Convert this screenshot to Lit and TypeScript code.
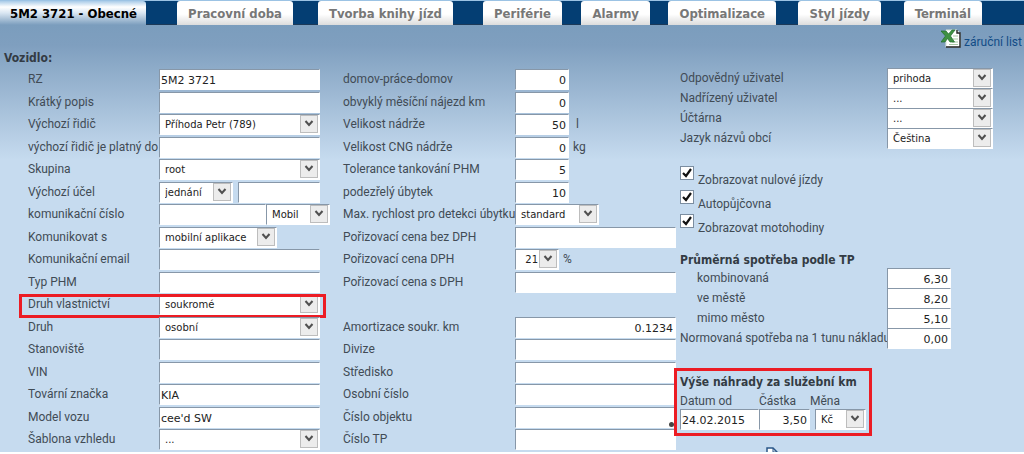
import { LitElement, html, css, svg, nothing } from "lit";
import { customElement } from "lit/decorators.js";
import { classMap } from "lit/directives/class-map.js";

type Control =
  | { kind: "text"; size: string; value?: string; num?: boolean; label?: string }
  | { kind: "select"; size: string; value: string; num?: boolean; label?: string };

interface Row {
  id: string;
  label: string;
  controls: Control[];
  unit?: string;
  marked?: boolean;
  dot?: boolean;
}

const text = (size: string, value = "", num = false, label = ""): Control => ({ kind: "text", size, value, num, label });
const select = (size: string, value: string, num = false, label = ""): Control => ({ kind: "select", size, value, num, label });

const TABS = ["5M2 3721 - Obecné", "Pracovní doba", "Tvorba knihy jízd", "Periférie", "Alarmy", "Optimalizace", "Styl jízdy", "Terminál"];

const VEHICLE: Row[] = [
  { id: "rz", label: "RZ", controls: [text("full", "5M2 3721")] },
  { id: "popis", label: "Krátký popis", controls: [text("full")] },
  { id: "ridic", label: "Výchozí řidič", controls: [select("full", "Příhoda Petr (789)")] },
  { id: "platny", label: "výchozí řidič je platný do", controls: [text("full")] },
  { id: "skupina", label: "Skupina", controls: [select("full", "root")] },
  { id: "ucel", label: "Výchozí účel", controls: [select("s74", "jednání"), text("rest", "", false, "Výchozí účel – text")] },
  { id: "cislo", label: "komunikační číslo", controls: [text("s107"), select("s64", "Mobil", false, "Typ čísla")] },
  { id: "komunikovat", label: "Komunikovat s", controls: [select("s118", "mobilní aplikace")] },
  { id: "email", label: "Komunikační email", controls: [text("full")] },
  { id: "phm", label: "Typ PHM", controls: [text("full")] },
  { id: "vlastnictvi", label: "Druh vlastnictví", controls: [select("full", "soukromé")], marked: true },
  { id: "druh", label: "Druh", controls: [select("full", "osobní")] },
  { id: "stanoviste", label: "Stanoviště", controls: [text("full")] },
  { id: "vin", label: "VIN", controls: [text("full")] },
  { id: "znacka", label: "Tovární značka", controls: [text("full", "KIA")] },
  { id: "model", label: "Model vozu", controls: [text("full", "cee'd SW")] },
  { id: "sablona", label: "Šablona vzhledu", controls: [select("full", "...")] },
];

const PARAMS: (Row | null)[] = [
  { id: "domov", label: "domov-práce-domov", controls: [text("s54", "0", true)] },
  { id: "najezd", label: "obvyklý měsíční nájezd km", controls: [text("s54", "0", true)] },
  { id: "nadrz", label: "Velikost nádrže", controls: [text("s54", "50", true)], unit: " l" },
  { id: "cng", label: "Velikost CNG nádrže", controls: [text("s54", "0", true)], unit: "kg" },
  { id: "tolerance", label: "Tolerance tankování PHM", controls: [text("s54", "5", true)] },
  { id: "ubytek", label: "podezřelý úbytek", controls: [text("s54", "10", true)] },
  { id: "rychlost", label: "Max. rychlost pro detekci úbytku", controls: [select("s84", "standard")] },
  { id: "bezdph", label: "Pořizovací cena bez DPH", controls: [text("full")] },
  { id: "dph", label: "Pořizovací cena DPH", controls: [select("s44", "21", true)], unit: "%" },
  { id: "sdph", label: "Pořizovací cena s DPH", controls: [text("full")] },
  null,
  { id: "amortizace", label: "Amortizace soukr. km", controls: [text("full", "0.1234", true)] },
  { id: "divize", label: "Divize", controls: [text("full")] },
  { id: "stredisko", label: "Středisko", controls: [text("full")] },
  { id: "osobni", label: "Osobní číslo", controls: [text("full")] },
  { id: "objekt", label: "Číslo objektu", controls: [text("full")], dot: true },
  { id: "tp", label: "Číslo TP", controls: [text("full")] },
  { id: "dalsi", label: "", controls: [text("full", "", false, "Další údaj")] },
];

const USERS: Row[] = [
  { id: "odpovedny", label: "Odpovědný uživatel", controls: [select("s106", "prihoda")] },
  { id: "nadrizeny", label: "Nadřízený uživatel", controls: [select("s106", "...")] },
  { id: "uctarna", label: "Účtárna", controls: [select("s106", "...")] },
  { id: "jazyk", label: "Jazyk názvů obcí", controls: [select("s106", "Čeština")] },
];

const CHECKS = ["Zobrazovat nulové jízdy", "Autopůjčovna", "Zobrazovat motohodiny"];

const CONSUMPTION = [
  { id: "komb", label: "kombinovaná", value: "6,30", indent: true },
  { id: "mesto", label: "ve městě", value: "8,20", indent: true },
  { id: "mimo", label: "mimo město", value: "5,10", indent: true },
  { id: "norm", label: "Normovaná spotřeba na 1 tunu nákladu", value: "0,00", indent: false },
];

@customElement("app-root")
export class AppRoot extends LitElement {
  static styles = css`
    :host {
      display: flex;
      flex-direction: column;
      box-sizing: border-box;
      height: 100vh;
      padding-bottom: 2px;
      overflow: hidden;
      background: #fff;
      color: #414b55;
      font: 12px/16px Roboto, "DejaVu Sans", sans-serif;
    }
    * { box-sizing: border-box; }
    .tabs {
      display: grid;
      grid-template-columns: 146px 129px 142px 91px 70px 108px 87px 83px;
      column-gap: 18px;
      flex: none;
      height: 25px;
      border-top: 1px solid #9cc3e4;
      border-bottom: 1px solid #1d3a58;
      background: #043e73;
    }
    .tab {
      justify-self: end;
      margin: 0;
      padding: 0 11px;
      border: 0;
      border-radius: 3px 3px 0 0;
      background: linear-gradient(#fff 55%, #dcdcdc);
      color: #777;
      font: bold 13px/23px "DejaVu Sans Condensed", "DejaVu Sans", sans-serif;
      white-space: nowrap;
    }
    .tab.active {
      justify-self: stretch;
      height: 24px;
      padding: 0 0 0 10px;
      border-radius: 0 3px 0 0;
      background: linear-gradient(#a9cbe8, #fff 25%, #d9e6f2 50%, #7b9dbd);
      color: #000;
      text-align: left;
    }
    .page {
      display: grid;
      grid-template-columns: minmax(0, 315fr) minmax(0, 337fr) minmax(0, 344fr);
      flex: 1;
      min-height: 0;
      padding-left: 28px;
      overflow: hidden;
      background: linear-gradient(#7b9dbd, #7f9fbf 20px, #c6dbef 135px, #c6dbef);
    }
    h2, h3 {
      margin: 0;
      color: #333b44;
      font: bold 12px/16px "DejaVu Sans Condensed", "DejaVu Sans", sans-serif;
    }
    .heading {
      height: 44px;
      margin-left: -24px;
      padding-top: 25px;
    }
    .rows {
      display: grid;
      grid-template-rows: repeat(9, 23px 22px);
      justify-items: start;
    }
    .second { padding-top: 44px; }
    .row {
      position: relative;
      display: flex;
      align-items: flex-start;
    }
    .caption {
      flex: none;
      width: 131px;
      padding-top: 2px;
      white-space: nowrap;
    }
    .second .caption { width: 172px; }
    .third .caption { width: 207px; }
    .field {
      position: relative;
      display: flex;
      width: 161px;
    }
    .text, .select {
      flex: none;
      height: 21px;
      margin: 0;
      border: 1px solid #fff;
      border-top-color: #8797a8;
      border-left-color: #8797a8;
      border-radius: 0;
      outline: 0;
      background-color: #fff;
      color: #222;
      font: 11px/16px "DejaVu Sans", sans-serif;
    }
    .text { padding: 1px 2px 0 1px; }
    .select {
      appearance: none;
      padding: 0 20px 0 5px;
      background-image: url("data:image/svg+xml,%3Csvg xmlns='http://www.w3.org/2000/svg' width='18' height='18'%3E%3Crect x='.5' y='.5' width='17' height='17' fill='%23ececec' stroke='%23bdbdbd'/%3E%3Cpath d='M5.5 6l3.5 4 3.5-4' fill='none' stroke='%23505050' stroke-width='2'/%3E%3C/svg%3E");
      background-position: right 1px top 0;
      background-repeat: no-repeat;
      font-size: 10px;
    }
    .num { text-align: right; }
    .full { width: 100%; }
    .rest { flex: 1; min-width: 0; margin-left: 5px; }
    .s44 { width: 44px; }
    .s54 { width: 54px; }
    .s64 { width: 64px; }
    .s74 { width: 74px; }
    .s84 { width: 84px; }
    .s106 { width: 106px; }
    .s107 { width: 107px; }
    .s118 { width: 118px; }
    .unit {
      padding: 2px 0 0 4px;
      white-space: pre;
    }
    .unitfield { width: auto; }
    .marker {
      position: absolute;
      inset: 0 -6px -1px -9px;
      border: 3px solid #ec1c24;
      pointer-events: none;
    }
    .dot {
      position: absolute;
      right: 2px;
      bottom: 1px;
      width: 5px;
      height: 5px;
      border-radius: 50%;
      background: #444;
    }
    .link {
      display: flex;
      justify-content: flex-end;
      align-items: flex-end;
      gap: 3px;
      height: 25px;
      padding-right: 2px;
      color: #124c86;
      text-decoration: none;
    }
    .excel { align-self: flex-start; margin-top: 4px; }
    .users {
      display: grid;
      grid-auto-rows: 20px;
      margin-top: 18px;
    }
    .checks { margin-top: 18px; }
    .check {
      display: flex;
      align-items: flex-start;
      gap: 4px;
      height: 24px;
    }
    .box {
      appearance: none;
      width: 14px;
      height: 14px;
      margin: 0;
      border: 1px solid #7b8da0;
      background: #fff url("data:image/svg+xml,%3Csvg xmlns='http://www.w3.org/2000/svg' width='12' height='12'%3E%3Cpath d='M2 6l3 3 5-7' fill='none' stroke='%23111' stroke-width='2.2'/%3E%3C/svg%3E") center no-repeat;
    }
    .checklabel { padding-top: 6px; }
    .subheading { margin-top: 14px; }
    .consumption {
      display: grid;
      grid-auto-rows: 20px;
    }
    .third .indent { padding-left: 17px; }
    .rate {
      position: relative;
      width: 198px;
      margin: 20px 0 0 -6px;
      padding: 3px;
      border: 3px solid #ec1c24;
    }
    .rategrid {
      display: grid;
      grid-template-columns: 79px 51px 56px;
    }
    .ratehead { padding-top: 3px; }
    .rate .select { justify-self: end; width: 51px; }
    .file {
      display: block;
      margin: 11px 0 0 86px;
    }
  `;

  private control(c: Control, id: string | undefined) {
    const classes = classMap({ [c.kind]: true, [c.size]: true, num: !!c.num });
    const name = c.label || nothing;
    return c.kind === "text"
      ? html`<input class=${classes} id=${id ?? nothing} aria-label=${name} type="text" .value=${c.value ?? ""} />`
      : html`<select class=${classes} id=${id ?? nothing} aria-label=${name}><option>${c.value}</option></select>`;
  }

  private row(r: Row | null) {
    if (!r) return html`<div class="row"></div>`;
    return html`<div class="row">
      <label class="caption" for=${r.id}>${r.label}</label>
      <div class=${classMap({ field: true, unitfield: !!r.unit })}>
        ${r.controls.map((c, i) => this.control(c, i === 0 ? r.id : undefined))}
        ${r.dot ? html`<span class="dot"></span>` : nothing}
      </div>
      ${r.unit ? html`<span class="unit">${r.unit}</span>` : nothing}
      ${r.marked ? html`<span class="marker"></span>` : nothing}
    </div>`;
  }

  render() {
    return html`
      <nav class="tabs">
        ${TABS.map((t, i) => html`<button class=${classMap({ tab: true, active: i === 0 })} type="button">${t}</button>`)}
      </nav>
      <main class="page">
        <section>
          <h2 class="heading">Vozidlo:</h2>
          <div class="rows">${VEHICLE.map((r) => this.row(r))}</div>
        </section>
        <section class="second">
          <div class="rows">${PARAMS.map((r) => this.row(r))}</div>
        </section>
        <section class="third">
          <a class="link" href="#">
            <svg class="excel" width="20" height="19" viewBox="0 0 20 19">
              ${svg`<path d="M5 1h11l3 3v14H5z" fill="#fff" stroke="#d8e4d8"/>
              <path d="M16 1v3h3v14H5" fill="none" stroke="#222" stroke-width="1.4"/>
              <path d="M12 7h5M12 10h5M11 13h6M8 15.500h9" stroke="#a9c7a4"/>
              <path d="M0 2h5l2.500 3L11 1h3L9.500 7l4 6H9L6.500 9.500 4 13H0l4.500-6z" fill="#3f9142" stroke="#1f6b2c" stroke-width=".7"/>`}
            </svg>
            <span>záruční list</span>
          </a>
          <div class="users">${USERS.map((r) => this.row(r))}</div>
          <div class="checks">
            ${CHECKS.map((c, i) => html`<div class="check">
              <input class="box" type="checkbox" id="check${i}" checked />
              <label class="checklabel" for="check${i}">${c}</label>
            </div>`)}
          </div>
          <h3 class="subheading">Průměrná spotřeba podle TP</h3>
          <div class="consumption">
            ${CONSUMPTION.map((c) => html`<div class="row">
              <label class=${classMap({ caption: true, indent: c.indent })} for=${c.id}>${c.label}</label>
              <input class="text num s64" id=${c.id} type="text" .value=${c.value} />
            </div>`)}
          </div>
          <div class="rate">
            <h3>Výše náhrady za služební km</h3>
            <div class="rategrid">
              <label class="ratehead" for="datum">Datum od</label>
              <label class="ratehead" for="castka">Částka</label>
              <label class="ratehead" for="mena">Měna</label>
              <input class="text" id="datum" type="text" .value=${"24.02.2015"} />
              <input class="text num" id="castka" type="text" .value=${"3,50"} />
              <select class="select" id="mena"><option>Kč</option></select>
            </div>
          </div>
          <svg class="file" width="12" height="14" viewBox="0 0 12 14">
            ${svg`<path d="M1 1h6l4 4v8H1z" fill="#fff" stroke="#2a5788" stroke-width="1.500"/><path d="M7 1v4h4" fill="none" stroke="#2a5788"/>`}
          </svg>
        </section>
      </main>
    `;
  }
}
